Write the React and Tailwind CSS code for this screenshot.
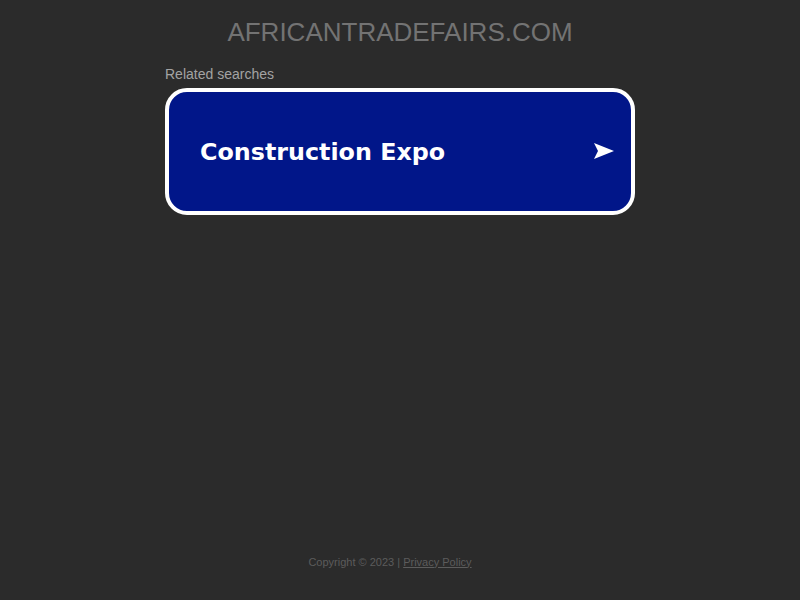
export default function App() {
    return (
        <div className="min-h-screen bg-[#2b2b2b] flex flex-col items-center font-['Liberation_Sans',Arial,sans-serif]">
            <h1 className="mt-[17px] text-[26px] leading-[30px] text-[#737373] tracking-normal">
                AFRICANTRADEFAIRS.COM
            </h1>
            <div className="w-[470px] mt-[19px]">
                <div className="text-[14px] leading-[16px] text-[#a3a3a3]">Related searches</div>
                <a
                    href="#"
                    className="mt-[6px] flex items-center justify-between h-[127px] rounded-[22px] border-[4px] border-white bg-[#011689] pl-[31px] pr-[16px]"
                >
                    <span className="mt-[3px] text-white font-bold text-[23.8px] font-['DejaVu_Sans',Verdana,sans-serif]">
                        Construction Expo
                    </span>
                    <svg width="22" height="18" viewBox="0 0 22 18" className="mt-[-1px]">
                        <path d="M1 1 L21 9 L1 17 L5 9 Z" fill="white" />
                    </svg>
                </a>
            </div>
            <div className="mt-auto mb-[30px] pr-[20px] text-[11px] text-[#5c5c5c]">
                Copyright © 2023 | <a href="#" className="underline">Privacy Policy</a>
            </div>
        </div>
    );
}
